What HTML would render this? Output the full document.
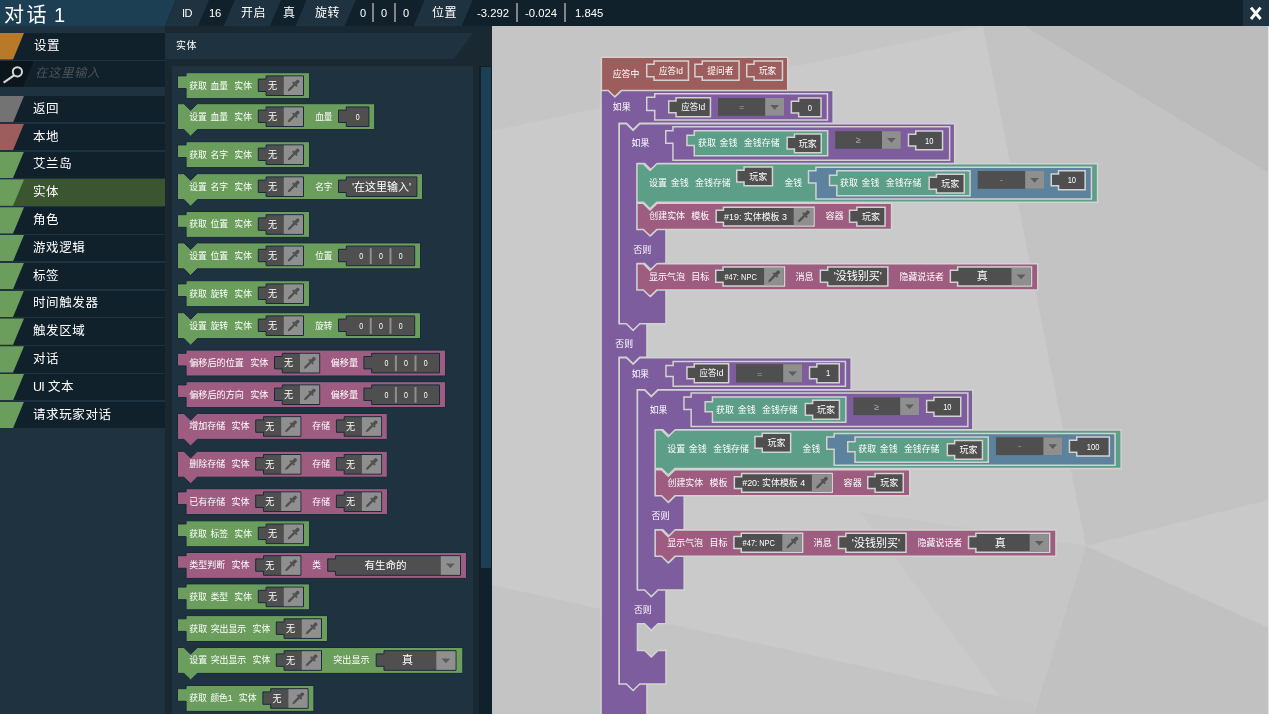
<!DOCTYPE html>
<html lang="zh"><head><meta charset="utf-8"><title>对话 1</title>
<style>
html,body{margin:0;padding:0;background:#1a2832;}
body{width:1269px;height:714px;overflow:hidden;position:relative;font-family:"Liberation Sans","Noto Sans CJK SC",sans-serif;color:#fff;}
#app{position:absolute;left:0;top:0;width:1269px;height:714px;overflow:hidden;background:#1a2832;}
#app svg,#app span,#app em{will-change:transform;}
#topbar{position:absolute;left:0;top:0;width:1269px;height:26px;background:#11212c;overflow:hidden;}
#title{position:absolute;left:0;top:0;width:176px;height:26px;background:#1c3f54;clip-path:polygon(0 0,176px 0,165px 26px,0 26px);}
#title span{position:absolute;left:4px;top:1.4px;font-size:20px;line-height:28px;letter-spacing:2.6px;white-space:nowrap;}
#title em{position:absolute;left:54.2px;top:1.4px;font-size:20px;line-height:28px;font-style:normal;}
.seg{position:absolute;top:0;height:26px;clip-path:polygon(11px 0,100% 0,calc(100% - 11px) 26px,0 26px);}
.seg.l{background:#1e323f;}
.seg.v{background:#11212c;}
.seg b{position:absolute;top:0;font-weight:normal;font-size:12px;line-height:25px;white-space:nowrap;transform-origin:0 50%;}
.sep{position:absolute;top:3px;width:2px;height:19px;background:#858585;}
#close{position:absolute;left:1243px;top:0;width:26px;height:26px;background:#1e323f;}
#side{position:absolute;left:0;top:26px;width:165px;height:688px;background:#1e323f;}
.row{position:absolute;left:0;width:165px;height:26.4px;background:#11212c;}
.row i{position:absolute;left:0;top:0;width:24px;height:100%;clip-path:polygon(0 0,24px 0,13px 100%,0 100%);}
.row span{position:absolute;left:32.8px;top:0.9px;font-size:12.5px;line-height:25px;letter-spacing:0.6px;white-space:nowrap;}
.row u{text-decoration:none;letter-spacing:-0.8px;}
.row.sel{background:#3a5530;}
.row.sel i{width:40px;clip-path:polygon(0 0,24px 0,13px 100%,0 100%);}
#set{position:absolute;left:0;top:33px;width:165px;height:26.6px;background:#11212c;}
#set i{position:absolute;left:0;top:0;width:24px;height:100%;background:#b87a28;clip-path:polygon(0 0,24px 0,13px 100%,0 100%);}
#set span{position:absolute;left:34px;top:1.2px;font-size:12.5px;line-height:25px;letter-spacing:0.6px;}
#search{position:absolute;left:0;top:60.6px;width:165px;height:26px;background:#11212c;}
#search i{position:absolute;left:0;top:0;width:34px;height:100%;background:#0b151c;clip-path:polygon(0 0,34px 0,23px 100%,0 100%);}
#search span{position:absolute;left:35px;top:0.2px;font-size:12.5px;line-height:25px;letter-spacing:0.5px;color:#4a5358;font-style:italic;}
#phead{position:absolute;left:165px;top:33px;width:308px;height:26px;background:#1e323f;clip-path:polygon(0 0,308px 0,289px 26px,0 26px);}
#phead span{position:absolute;left:10.8px;top:0;font-size:10px;line-height:26px;letter-spacing:0.6px;}
#pal{position:absolute;left:172px;top:66px;width:301px;height:648px;background:#1e323f;overflow:hidden;}
#track{position:absolute;left:479px;top:66px;width:13px;height:648px;background:#11212c;}
#thumb{position:absolute;left:481px;top:67px;width:10px;height:501px;background:#1c3f54;}
#canvas{position:absolute;left:492px;top:26px;width:777px;height:688px;background:#cacaca;overflow:hidden;}
#edge{position:absolute;left:1268px;top:26px;width:1px;height:688px;background:#e4e4e4;}
</style></head><body>
<div id="app">
<div id="topbar">
<div class="seg l" style="left:165.4px;width:43.6px"></div>
<div class="seg l" style="left:223.8px;width:57.2px"></div>
<div class="seg l" style="left:295.5px;width:60.2px"></div>
<div class="seg l" style="left:413.6px;width:59.1px"></div>
<span style="position:absolute;left:182.3px;top:0.8px;font-size:11px;line-height:25px;white-space:nowrap;letter-spacing:-0.6px;">ID</span>
<span style="position:absolute;left:208.8px;top:0.8px;font-size:11.3px;line-height:25px;white-space:nowrap;letter-spacing:-0.2px;">16</span>
<span style="position:absolute;left:241px;top:0.8px;font-size:12px;line-height:25px;white-space:nowrap;letter-spacing:0.4px;">开启</span>
<span style="position:absolute;left:283px;top:0.8px;font-size:12px;line-height:25px;white-space:nowrap;">真</span>
<span style="position:absolute;left:314.7px;top:0.8px;font-size:12px;line-height:25px;white-space:nowrap;letter-spacing:0.4px;">旋转</span>
<span style="position:absolute;left:359.6px;top:0.8px;font-size:11px;line-height:25px;white-space:nowrap;">0</span>
<span style="position:absolute;left:381px;top:0.8px;font-size:11px;line-height:25px;white-space:nowrap;">0</span>
<span style="position:absolute;left:403px;top:0.8px;font-size:11px;line-height:25px;white-space:nowrap;">0</span>
<span style="position:absolute;left:432.2px;top:0.8px;font-size:12px;line-height:25px;white-space:nowrap;letter-spacing:0.4px;">位置</span>
<span style="position:absolute;left:476.8px;top:0.8px;font-size:11.3px;line-height:25px;white-space:nowrap;">-3.292</span>
<span style="position:absolute;left:524.6px;top:0.8px;font-size:11.3px;line-height:25px;white-space:nowrap;">-0.024</span>
<span style="position:absolute;left:575px;top:0.8px;font-size:11.3px;line-height:25px;white-space:nowrap;">1.845</span>
<div class="sep" style="left:372.2px"></div>
<div class="sep" style="left:393.8px"></div>
<div class="sep" style="left:516px"></div>
<div class="sep" style="left:564.2px"></div>
</div>
<div id="title"><span>对话</span><em>1</em></div>
<div id="close"><svg width="26" height="26" viewBox="0 0 26 26" style="position:absolute;left:0;top:0"><path d="M8 7.6 L17.6 19 M17.6 7.6 L8 19" stroke="#fff" stroke-width="3" fill="none"/></svg></div>
<div id="side">
</div>
<div id="set"><i></i><span>设置</span></div>
<div id="search"><i></i><svg width="34" height="26" viewBox="0 0 34 26" style="position:absolute;left:0;top:0"><circle cx="17.4" cy="10.8" r="4.6" fill="none" stroke="#d6d6d6" stroke-width="2"/><path d="M14 14.4 L3.6 21.6" stroke="#d6d6d6" stroke-width="2.2" fill="none"/></svg><span>在这里输入</span></div>
<div class="row" style="top:96px"><i style="background:#737373"></i><span>返回</span></div>
<div class="row" style="top:123.8px"><i style="background:#9e5d5d"></i><span>本地</span></div>
<div class="row" style="top:151.6px"><i style="background:#6b9e5d"></i><span>艾兰岛</span></div>
<div class="row sel" style="top:179.4px"><i style="background:#6b9e5d"></i><span>实体</span></div>
<div class="row" style="top:207.2px"><i style="background:#6b9e5d"></i><span>角色</span></div>
<div class="row" style="top:235px"><i style="background:#6b9e5d"></i><span>游戏逻辑</span></div>
<div class="row" style="top:262.8px"><i style="background:#6b9e5d"></i><span>标签</span></div>
<div class="row" style="top:290.6px"><i style="background:#6b9e5d"></i><span>时间触发器</span></div>
<div class="row" style="top:318.4px"><i style="background:#6b9e5d"></i><span>触发区域</span></div>
<div class="row" style="top:346.2px"><i style="background:#6b9e5d"></i><span>对话</span></div>
<div class="row" style="top:374px"><i style="background:#6b9e5d"></i><span><u>UI</u> 文本</span></div>
<div class="row" style="top:401.8px"><i style="background:#6b9e5d"></i><span>请求玩家对话</span></div>
<div id="phead"><span>实体</span></div>
<div id="pal"><svg width="301" height="648" viewBox="172 66 301 648" font-family='"Liberation Sans","Noto Sans CJK SC",sans-serif' style="position:absolute;left:0;top:0;"><path d="M186.1 72.7 L309.5 72.7 L309.5 98.6 L186.1 98.6 L186.1 88.5 L177.5 88.5 L177.5 75.9 L186.1 75.9 Z" fill="#6b9e5d" stroke="#1a2a3b" stroke-width="1"/>
<text x="189.2" y="88.6" font-size="8.8" text-anchor="start" fill="#fff" textLength="17.63" lengthAdjust="spacingAndGlyphs">获取</text>
<text x="210.43" y="88.6" font-size="8.8" text-anchor="start" fill="#fff" textLength="17.63" lengthAdjust="spacingAndGlyphs">血量</text>
<text x="234.37" y="88.6" font-size="8.8" text-anchor="start" fill="#fff" textLength="17.63" lengthAdjust="spacingAndGlyphs">实体</text>
<path d="M266.1 75.9 L303.5 75.9 L303.5 95.5 L266.1 95.5 L266.1 91.5 L258.3 91.5 L258.3 79.1 L266.1 79.1 Z" fill="#4f4f4f" stroke="#1a2a3b" stroke-width="1"/>
<rect x="283.8" y="76.4" width="19.2" height="18.6" fill="#8f8f8f"/>
<g transform="translate(293.7 85.4) rotate(-45)" fill="#505050"><path d="M-8.4 0 L-6.4 -1.15 L1.2 -1.15 L1.2 1.15 L-6.4 1.15 Z"/><rect x="0.8" y="-3.1" width="1.7" height="6.2"/><path d="M2.4 -1.7 L6.8 -1.7 Q8.2 0 6.8 1.7 L2.4 1.7 Z"/></g>
<text x="272.4" y="88.94" font-size="9" text-anchor="middle" fill="#fff">无</text>
<path d="M177.5 103.7 L183.9 103.7 L190.6 110.3 L197.3 103.7 L374.7 103.7 L374.7 129.6 L197.3 129.6 L190.6 136.2 L183.9 129.6 L177.5 129.6 Z" fill="#6b9e5d" stroke="#1a2a3b" stroke-width="1"/>
<text x="189.2" y="119.6" font-size="8.8" text-anchor="start" fill="#fff" textLength="17.63" lengthAdjust="spacingAndGlyphs">设置</text>
<text x="210.43" y="119.6" font-size="8.8" text-anchor="start" fill="#fff" textLength="17.63" lengthAdjust="spacingAndGlyphs">血量</text>
<text x="234.37" y="119.6" font-size="8.8" text-anchor="start" fill="#fff" textLength="17.63" lengthAdjust="spacingAndGlyphs">实体</text>
<path d="M266.1 106.9 L303.5 106.9 L303.5 126.5 L266.1 126.5 L266.1 122.5 L258.3 122.5 L258.3 110.1 L266.1 110.1 Z" fill="#4f4f4f" stroke="#1a2a3b" stroke-width="1"/>
<rect x="283.8" y="107.4" width="19.2" height="18.6" fill="#8f8f8f"/>
<g transform="translate(293.7 116.4) rotate(-45)" fill="#505050"><path d="M-8.4 0 L-6.4 -1.15 L1.2 -1.15 L1.2 1.15 L-6.4 1.15 Z"/><rect x="0.8" y="-3.1" width="1.7" height="6.2"/><path d="M2.4 -1.7 L6.8 -1.7 Q8.2 0 6.8 1.7 L2.4 1.7 Z"/></g>
<text x="272.4" y="119.94" font-size="9" text-anchor="middle" fill="#fff">无</text>
<text x="315.2" y="119.6" font-size="8.8" text-anchor="start" fill="#fff" textLength="17.2" lengthAdjust="spacingAndGlyphs">血量</text>
<path d="M346.3 106.9 L368.9 106.9 L368.9 126.5 L346.3 126.5 L346.3 122.5 L338.5 122.5 L338.5 110.1 L346.3 110.1 Z" fill="#4f4f4f" stroke="#1a2a3b" stroke-width="1"/>
<text x="357.6" y="119.94" font-size="9" text-anchor="middle" fill="#fff" textLength="3.9" lengthAdjust="spacingAndGlyphs">0</text>
<path d="M186.1 141.7 L309.5 141.7 L309.5 167.6 L186.1 167.6 L186.1 157.5 L177.5 157.5 L177.5 144.9 L186.1 144.9 Z" fill="#6b9e5d" stroke="#1a2a3b" stroke-width="1"/>
<text x="189.2" y="157.6" font-size="8.8" text-anchor="start" fill="#fff" textLength="17.63" lengthAdjust="spacingAndGlyphs">获取</text>
<text x="210.43" y="157.6" font-size="8.8" text-anchor="start" fill="#fff" textLength="17.63" lengthAdjust="spacingAndGlyphs">名字</text>
<text x="234.37" y="157.6" font-size="8.8" text-anchor="start" fill="#fff" textLength="17.63" lengthAdjust="spacingAndGlyphs">实体</text>
<path d="M266.1 144.9 L303.5 144.9 L303.5 164.5 L266.1 164.5 L266.1 160.5 L258.3 160.5 L258.3 148.1 L266.1 148.1 Z" fill="#4f4f4f" stroke="#1a2a3b" stroke-width="1"/>
<rect x="283.8" y="145.4" width="19.2" height="18.6" fill="#8f8f8f"/>
<g transform="translate(293.7 154.4) rotate(-45)" fill="#505050"><path d="M-8.4 0 L-6.4 -1.15 L1.2 -1.15 L1.2 1.15 L-6.4 1.15 Z"/><rect x="0.8" y="-3.1" width="1.7" height="6.2"/><path d="M2.4 -1.7 L6.8 -1.7 Q8.2 0 6.8 1.7 L2.4 1.7 Z"/></g>
<text x="272.4" y="157.94" font-size="9" text-anchor="middle" fill="#fff">无</text>
<path d="M177.5 173.7 L183.9 173.7 L190.6 180.3 L197.3 173.7 L422.5 173.7 L422.5 199.6 L197.3 199.6 L190.6 206.2 L183.9 199.6 L177.5 199.6 Z" fill="#6b9e5d" stroke="#1a2a3b" stroke-width="1"/>
<text x="189.2" y="189.6" font-size="8.8" text-anchor="start" fill="#fff" textLength="17.63" lengthAdjust="spacingAndGlyphs">设置</text>
<text x="210.43" y="189.6" font-size="8.8" text-anchor="start" fill="#fff" textLength="17.63" lengthAdjust="spacingAndGlyphs">名字</text>
<text x="234.37" y="189.6" font-size="8.8" text-anchor="start" fill="#fff" textLength="17.63" lengthAdjust="spacingAndGlyphs">实体</text>
<path d="M266.1 176.9 L303.5 176.9 L303.5 196.5 L266.1 196.5 L266.1 192.5 L258.3 192.5 L258.3 180.1 L266.1 180.1 Z" fill="#4f4f4f" stroke="#1a2a3b" stroke-width="1"/>
<rect x="283.8" y="177.4" width="19.2" height="18.6" fill="#8f8f8f"/>
<g transform="translate(293.7 186.4) rotate(-45)" fill="#505050"><path d="M-8.4 0 L-6.4 -1.15 L1.2 -1.15 L1.2 1.15 L-6.4 1.15 Z"/><rect x="0.8" y="-3.1" width="1.7" height="6.2"/><path d="M2.4 -1.7 L6.8 -1.7 Q8.2 0 6.8 1.7 L2.4 1.7 Z"/></g>
<text x="272.4" y="189.94" font-size="9" text-anchor="middle" fill="#fff">无</text>
<text x="315.2" y="189.6" font-size="8.8" text-anchor="start" fill="#fff" textLength="17.2" lengthAdjust="spacingAndGlyphs">名字</text>
<path d="M346.3 176.9 L416.9 176.9 L416.9 196.5 L346.3 196.5 L346.3 192.5 L338.5 192.5 L338.5 180.1 L346.3 180.1 Z" fill="#4f4f4f" stroke="#1a2a3b" stroke-width="1"/>
<text x="381.6" y="190.66" font-size="11" text-anchor="middle" fill="#fff">'在这里输入'</text>
<path d="M186.1 211.5 L309.5 211.5 L309.5 237.4 L186.1 237.4 L186.1 227.3 L177.5 227.3 L177.5 214.7 L186.1 214.7 Z" fill="#6b9e5d" stroke="#1a2a3b" stroke-width="1"/>
<text x="189.2" y="227.4" font-size="8.8" text-anchor="start" fill="#fff" textLength="17.63" lengthAdjust="spacingAndGlyphs">获取</text>
<text x="210.43" y="227.4" font-size="8.8" text-anchor="start" fill="#fff" textLength="17.63" lengthAdjust="spacingAndGlyphs">位置</text>
<text x="234.37" y="227.4" font-size="8.8" text-anchor="start" fill="#fff" textLength="17.63" lengthAdjust="spacingAndGlyphs">实体</text>
<path d="M266.1 214.7 L303.5 214.7 L303.5 234.3 L266.1 234.3 L266.1 230.3 L258.3 230.3 L258.3 217.9 L266.1 217.9 Z" fill="#4f4f4f" stroke="#1a2a3b" stroke-width="1"/>
<rect x="283.8" y="215.2" width="19.2" height="18.6" fill="#8f8f8f"/>
<g transform="translate(293.7 224.2) rotate(-45)" fill="#505050"><path d="M-8.4 0 L-6.4 -1.15 L1.2 -1.15 L1.2 1.15 L-6.4 1.15 Z"/><rect x="0.8" y="-3.1" width="1.7" height="6.2"/><path d="M2.4 -1.7 L6.8 -1.7 Q8.2 0 6.8 1.7 L2.4 1.7 Z"/></g>
<text x="272.4" y="227.74" font-size="9" text-anchor="middle" fill="#fff">无</text>
<path d="M177.5 242.9 L183.9 242.9 L190.6 249.5 L197.3 242.9 L420.5 242.9 L420.5 268.8 L197.3 268.8 L190.6 275.4 L183.9 268.8 L177.5 268.8 Z" fill="#6b9e5d" stroke="#1a2a3b" stroke-width="1"/>
<text x="189.2" y="258.8" font-size="8.8" text-anchor="start" fill="#fff" textLength="17.63" lengthAdjust="spacingAndGlyphs">设置</text>
<text x="210.43" y="258.8" font-size="8.8" text-anchor="start" fill="#fff" textLength="17.63" lengthAdjust="spacingAndGlyphs">位置</text>
<text x="234.37" y="258.8" font-size="8.8" text-anchor="start" fill="#fff" textLength="17.63" lengthAdjust="spacingAndGlyphs">实体</text>
<path d="M266.1 246.1 L303.5 246.1 L303.5 265.7 L266.1 265.7 L266.1 261.7 L258.3 261.7 L258.3 249.3 L266.1 249.3 Z" fill="#4f4f4f" stroke="#1a2a3b" stroke-width="1"/>
<rect x="283.8" y="246.6" width="19.2" height="18.6" fill="#8f8f8f"/>
<g transform="translate(293.7 255.6) rotate(-45)" fill="#505050"><path d="M-8.4 0 L-6.4 -1.15 L1.2 -1.15 L1.2 1.15 L-6.4 1.15 Z"/><rect x="0.8" y="-3.1" width="1.7" height="6.2"/><path d="M2.4 -1.7 L6.8 -1.7 Q8.2 0 6.8 1.7 L2.4 1.7 Z"/></g>
<text x="272.4" y="259.14" font-size="9" text-anchor="middle" fill="#fff">无</text>
<text x="315.2" y="258.8" font-size="8.8" text-anchor="start" fill="#fff" textLength="17.2" lengthAdjust="spacingAndGlyphs">位置</text>
<path d="M346.3 246.1 L414.7 246.1 L414.7 265.7 L346.3 265.7 L346.3 261.7 L338.5 261.7 L338.5 249.3 L346.3 249.3 Z" fill="#4f4f4f" stroke="#1a2a3b" stroke-width="1"/>
<text x="361.29" y="259" font-size="9" text-anchor="middle" fill="#fff" textLength="3.9" lengthAdjust="spacingAndGlyphs">0</text>
<text x="380.97" y="259" font-size="9" text-anchor="middle" fill="#fff" textLength="3.9" lengthAdjust="spacingAndGlyphs">0</text>
<text x="400.72" y="259" font-size="9" text-anchor="middle" fill="#fff" textLength="3.9" lengthAdjust="spacingAndGlyphs">0</text>
<rect x="369.73" y="248.2" width="2" height="15.8" fill="#8e8e8e"/>
<rect x="389.48" y="248.2" width="2" height="15.8" fill="#8e8e8e"/>
<path d="M186.1 280.7 L309.5 280.7 L309.5 306.6 L186.1 306.6 L186.1 296.5 L177.5 296.5 L177.5 283.9 L186.1 283.9 Z" fill="#6b9e5d" stroke="#1a2a3b" stroke-width="1"/>
<text x="189.2" y="296.6" font-size="8.8" text-anchor="start" fill="#fff" textLength="17.63" lengthAdjust="spacingAndGlyphs">获取</text>
<text x="210.43" y="296.6" font-size="8.8" text-anchor="start" fill="#fff" textLength="17.63" lengthAdjust="spacingAndGlyphs">旋转</text>
<text x="234.37" y="296.6" font-size="8.8" text-anchor="start" fill="#fff" textLength="17.63" lengthAdjust="spacingAndGlyphs">实体</text>
<path d="M266.1 283.9 L303.5 283.9 L303.5 303.5 L266.1 303.5 L266.1 299.5 L258.3 299.5 L258.3 287.1 L266.1 287.1 Z" fill="#4f4f4f" stroke="#1a2a3b" stroke-width="1"/>
<rect x="283.8" y="284.4" width="19.2" height="18.6" fill="#8f8f8f"/>
<g transform="translate(293.7 293.4) rotate(-45)" fill="#505050"><path d="M-8.4 0 L-6.4 -1.15 L1.2 -1.15 L1.2 1.15 L-6.4 1.15 Z"/><rect x="0.8" y="-3.1" width="1.7" height="6.2"/><path d="M2.4 -1.7 L6.8 -1.7 Q8.2 0 6.8 1.7 L2.4 1.7 Z"/></g>
<text x="272.4" y="296.94" font-size="9" text-anchor="middle" fill="#fff">无</text>
<path d="M177.5 312.7 L183.9 312.7 L190.6 319.3 L197.3 312.7 L420.5 312.7 L420.5 338.6 L197.3 338.6 L190.6 345.2 L183.9 338.6 L177.5 338.6 Z" fill="#6b9e5d" stroke="#1a2a3b" stroke-width="1"/>
<text x="189.2" y="328.6" font-size="8.8" text-anchor="start" fill="#fff" textLength="17.63" lengthAdjust="spacingAndGlyphs">设置</text>
<text x="210.43" y="328.6" font-size="8.8" text-anchor="start" fill="#fff" textLength="17.63" lengthAdjust="spacingAndGlyphs">旋转</text>
<text x="234.37" y="328.6" font-size="8.8" text-anchor="start" fill="#fff" textLength="17.63" lengthAdjust="spacingAndGlyphs">实体</text>
<path d="M266.1 315.9 L303.5 315.9 L303.5 335.5 L266.1 335.5 L266.1 331.5 L258.3 331.5 L258.3 319.1 L266.1 319.1 Z" fill="#4f4f4f" stroke="#1a2a3b" stroke-width="1"/>
<rect x="283.8" y="316.4" width="19.2" height="18.6" fill="#8f8f8f"/>
<g transform="translate(293.7 325.4) rotate(-45)" fill="#505050"><path d="M-8.4 0 L-6.4 -1.15 L1.2 -1.15 L1.2 1.15 L-6.4 1.15 Z"/><rect x="0.8" y="-3.1" width="1.7" height="6.2"/><path d="M2.4 -1.7 L6.8 -1.7 Q8.2 0 6.8 1.7 L2.4 1.7 Z"/></g>
<text x="272.4" y="328.94" font-size="9" text-anchor="middle" fill="#fff">无</text>
<text x="315.2" y="328.6" font-size="8.8" text-anchor="start" fill="#fff" textLength="17.2" lengthAdjust="spacingAndGlyphs">旋转</text>
<path d="M346.3 315.9 L414.7 315.9 L414.7 335.5 L346.3 335.5 L346.3 331.5 L338.5 331.5 L338.5 319.1 L346.3 319.1 Z" fill="#4f4f4f" stroke="#1a2a3b" stroke-width="1"/>
<text x="361.29" y="328.8" font-size="9" text-anchor="middle" fill="#fff" textLength="3.9" lengthAdjust="spacingAndGlyphs">0</text>
<text x="380.97" y="328.8" font-size="9" text-anchor="middle" fill="#fff" textLength="3.9" lengthAdjust="spacingAndGlyphs">0</text>
<text x="400.72" y="328.8" font-size="9" text-anchor="middle" fill="#fff" textLength="3.9" lengthAdjust="spacingAndGlyphs">0</text>
<rect x="369.73" y="318" width="2" height="15.8" fill="#8e8e8e"/>
<rect x="389.48" y="318" width="2" height="15.8" fill="#8e8e8e"/>
<path d="M186.1 350.1 L445.5 350.1 L445.5 376 L186.1 376 L186.1 365.9 L177.5 365.9 L177.5 353.3 L186.1 353.3 Z" fill="#9e5d80" stroke="#1a2a3b" stroke-width="1"/>
<text x="189.2" y="366" font-size="8.8" text-anchor="start" fill="#fff" textLength="54.68" lengthAdjust="spacingAndGlyphs">偏移后的位置</text>
<text x="250.17" y="366" font-size="8.8" text-anchor="start" fill="#fff" textLength="18.43" lengthAdjust="spacingAndGlyphs">实体</text>
<path d="M282.3 353.3 L319.7 353.3 L319.7 372.9 L282.3 372.9 L282.3 368.9 L274.5 368.9 L274.5 356.5 L282.3 356.5 Z" fill="#4f4f4f" stroke="#1a2a3b" stroke-width="1"/>
<rect x="300" y="353.8" width="19.2" height="18.6" fill="#8f8f8f"/>
<g transform="translate(309.9 362.8) rotate(-45)" fill="#505050"><path d="M-8.4 0 L-6.4 -1.15 L1.2 -1.15 L1.2 1.15 L-6.4 1.15 Z"/><rect x="0.8" y="-3.1" width="1.7" height="6.2"/><path d="M2.4 -1.7 L6.8 -1.7 Q8.2 0 6.8 1.7 L2.4 1.7 Z"/></g>
<text x="288.6" y="366.34" font-size="9" text-anchor="middle" fill="#fff">无</text>
<text x="330.5" y="366" font-size="8.8" text-anchor="start" fill="#fff" textLength="27.8" lengthAdjust="spacingAndGlyphs">偏移量</text>
<path d="M371.7 353.3 L439.5 353.3 L439.5 372.9 L371.7 372.9 L371.7 368.9 L363.9 368.9 L363.9 356.5 L371.7 356.5 Z" fill="#4f4f4f" stroke="#1a2a3b" stroke-width="1"/>
<text x="386.56" y="366.2" font-size="9" text-anchor="middle" fill="#fff" textLength="3.9" lengthAdjust="spacingAndGlyphs">0</text>
<text x="406.07" y="366.2" font-size="9" text-anchor="middle" fill="#fff" textLength="3.9" lengthAdjust="spacingAndGlyphs">0</text>
<text x="425.64" y="366.2" font-size="9" text-anchor="middle" fill="#fff" textLength="3.9" lengthAdjust="spacingAndGlyphs">0</text>
<rect x="394.91" y="355.4" width="2" height="15.8" fill="#8e8e8e"/>
<rect x="414.49" y="355.4" width="2" height="15.8" fill="#8e8e8e"/>
<path d="M186.1 381.7 L445.5 381.7 L445.5 407.6 L186.1 407.6 L186.1 397.5 L177.5 397.5 L177.5 384.9 L186.1 384.9 Z" fill="#9e5d80" stroke="#1a2a3b" stroke-width="1"/>
<text x="189.2" y="397.6" font-size="8.8" text-anchor="start" fill="#fff" textLength="54.68" lengthAdjust="spacingAndGlyphs">偏移后的方向</text>
<text x="250.17" y="397.6" font-size="8.8" text-anchor="start" fill="#fff" textLength="18.43" lengthAdjust="spacingAndGlyphs">实体</text>
<path d="M282.3 384.9 L319.7 384.9 L319.7 404.5 L282.3 404.5 L282.3 400.5 L274.5 400.5 L274.5 388.1 L282.3 388.1 Z" fill="#4f4f4f" stroke="#1a2a3b" stroke-width="1"/>
<rect x="300" y="385.4" width="19.2" height="18.6" fill="#8f8f8f"/>
<g transform="translate(309.9 394.4) rotate(-45)" fill="#505050"><path d="M-8.4 0 L-6.4 -1.15 L1.2 -1.15 L1.2 1.15 L-6.4 1.15 Z"/><rect x="0.8" y="-3.1" width="1.7" height="6.2"/><path d="M2.4 -1.7 L6.8 -1.7 Q8.2 0 6.8 1.7 L2.4 1.7 Z"/></g>
<text x="288.6" y="397.94" font-size="9" text-anchor="middle" fill="#fff">无</text>
<text x="330.5" y="397.6" font-size="8.8" text-anchor="start" fill="#fff" textLength="27.8" lengthAdjust="spacingAndGlyphs">偏移量</text>
<path d="M371.7 384.9 L439.5 384.9 L439.5 404.5 L371.7 404.5 L371.7 400.5 L363.9 400.5 L363.9 388.1 L371.7 388.1 Z" fill="#4f4f4f" stroke="#1a2a3b" stroke-width="1"/>
<text x="386.56" y="397.8" font-size="9" text-anchor="middle" fill="#fff" textLength="3.9" lengthAdjust="spacingAndGlyphs">0</text>
<text x="406.07" y="397.8" font-size="9" text-anchor="middle" fill="#fff" textLength="3.9" lengthAdjust="spacingAndGlyphs">0</text>
<text x="425.64" y="397.8" font-size="9" text-anchor="middle" fill="#fff" textLength="3.9" lengthAdjust="spacingAndGlyphs">0</text>
<rect x="394.91" y="387" width="2" height="15.8" fill="#8e8e8e"/>
<rect x="414.49" y="387" width="2" height="15.8" fill="#8e8e8e"/>
<path d="M177.5 413.5 L183.9 413.5 L190.6 420.1 L197.3 413.5 L387.3 413.5 L387.3 439.4 L197.3 439.4 L190.6 446 L183.9 439.4 L177.5 439.4 Z" fill="#9e5d80" stroke="#1a2a3b" stroke-width="1"/>
<text x="189.2" y="429.4" font-size="8.8" text-anchor="start" fill="#fff" textLength="35.97" lengthAdjust="spacingAndGlyphs">增加存储</text>
<text x="231.47" y="429.4" font-size="8.8" text-anchor="start" fill="#fff" textLength="18.13" lengthAdjust="spacingAndGlyphs">实体</text>
<path d="M263.5 416.7 L300.9 416.7 L300.9 436.3 L263.5 436.3 L263.5 432.3 L255.7 432.3 L255.7 419.9 L263.5 419.9 Z" fill="#4f4f4f" stroke="#1a2a3b" stroke-width="1"/>
<rect x="281.2" y="417.2" width="19.2" height="18.6" fill="#8f8f8f"/>
<g transform="translate(291.1 426.2) rotate(-45)" fill="#505050"><path d="M-8.4 0 L-6.4 -1.15 L1.2 -1.15 L1.2 1.15 L-6.4 1.15 Z"/><rect x="0.8" y="-3.1" width="1.7" height="6.2"/><path d="M2.4 -1.7 L6.8 -1.7 Q8.2 0 6.8 1.7 L2.4 1.7 Z"/></g>
<text x="269.8" y="429.74" font-size="9" text-anchor="middle" fill="#fff">无</text>
<text x="312.3" y="429.4" font-size="8.8" text-anchor="start" fill="#fff" textLength="17.7" lengthAdjust="spacingAndGlyphs">存储</text>
<path d="M344.2 416.7 L381.6 416.7 L381.6 436.3 L344.2 436.3 L344.2 432.3 L336.4 432.3 L336.4 419.9 L344.2 419.9 Z" fill="#4f4f4f" stroke="#1a2a3b" stroke-width="1"/>
<rect x="361.9" y="417.2" width="19.2" height="18.6" fill="#8f8f8f"/>
<g transform="translate(371.8 426.2) rotate(-45)" fill="#505050"><path d="M-8.4 0 L-6.4 -1.15 L1.2 -1.15 L1.2 1.15 L-6.4 1.15 Z"/><rect x="0.8" y="-3.1" width="1.7" height="6.2"/><path d="M2.4 -1.7 L6.8 -1.7 Q8.2 0 6.8 1.7 L2.4 1.7 Z"/></g>
<text x="350.5" y="429.74" font-size="9" text-anchor="middle" fill="#fff">无</text>
<path d="M177.5 451.3 L183.9 451.3 L190.6 457.9 L197.3 451.3 L387.3 451.3 L387.3 477.2 L197.3 477.2 L190.6 483.8 L183.9 477.2 L177.5 477.2 Z" fill="#9e5d80" stroke="#1a2a3b" stroke-width="1"/>
<text x="189.2" y="467.2" font-size="8.8" text-anchor="start" fill="#fff" textLength="35.97" lengthAdjust="spacingAndGlyphs">删除存储</text>
<text x="231.47" y="467.2" font-size="8.8" text-anchor="start" fill="#fff" textLength="18.13" lengthAdjust="spacingAndGlyphs">实体</text>
<path d="M263.5 454.5 L300.9 454.5 L300.9 474.1 L263.5 474.1 L263.5 470.1 L255.7 470.1 L255.7 457.7 L263.5 457.7 Z" fill="#4f4f4f" stroke="#1a2a3b" stroke-width="1"/>
<rect x="281.2" y="455" width="19.2" height="18.6" fill="#8f8f8f"/>
<g transform="translate(291.1 464) rotate(-45)" fill="#505050"><path d="M-8.4 0 L-6.4 -1.15 L1.2 -1.15 L1.2 1.15 L-6.4 1.15 Z"/><rect x="0.8" y="-3.1" width="1.7" height="6.2"/><path d="M2.4 -1.7 L6.8 -1.7 Q8.2 0 6.8 1.7 L2.4 1.7 Z"/></g>
<text x="269.8" y="467.54" font-size="9" text-anchor="middle" fill="#fff">无</text>
<text x="312.3" y="467.2" font-size="8.8" text-anchor="start" fill="#fff" textLength="17.7" lengthAdjust="spacingAndGlyphs">存储</text>
<path d="M344.2 454.5 L381.6 454.5 L381.6 474.1 L344.2 474.1 L344.2 470.1 L336.4 470.1 L336.4 457.7 L344.2 457.7 Z" fill="#4f4f4f" stroke="#1a2a3b" stroke-width="1"/>
<rect x="361.9" y="455" width="19.2" height="18.6" fill="#8f8f8f"/>
<g transform="translate(371.8 464) rotate(-45)" fill="#505050"><path d="M-8.4 0 L-6.4 -1.15 L1.2 -1.15 L1.2 1.15 L-6.4 1.15 Z"/><rect x="0.8" y="-3.1" width="1.7" height="6.2"/><path d="M2.4 -1.7 L6.8 -1.7 Q8.2 0 6.8 1.7 L2.4 1.7 Z"/></g>
<text x="350.5" y="467.54" font-size="9" text-anchor="middle" fill="#fff">无</text>
<path d="M186.1 488.7 L387.5 488.7 L387.5 514.6 L186.1 514.6 L186.1 504.5 L177.5 504.5 L177.5 491.9 L186.1 491.9 Z" fill="#9e5d80" stroke="#1a2a3b" stroke-width="1"/>
<text x="189.2" y="504.6" font-size="8.8" text-anchor="start" fill="#fff" textLength="35.97" lengthAdjust="spacingAndGlyphs">已有存储</text>
<text x="231.47" y="504.6" font-size="8.8" text-anchor="start" fill="#fff" textLength="18.13" lengthAdjust="spacingAndGlyphs">实体</text>
<path d="M263.5 491.9 L300.9 491.9 L300.9 511.5 L263.5 511.5 L263.5 507.5 L255.7 507.5 L255.7 495.1 L263.5 495.1 Z" fill="#4f4f4f" stroke="#1a2a3b" stroke-width="1"/>
<rect x="281.2" y="492.4" width="19.2" height="18.6" fill="#8f8f8f"/>
<g transform="translate(291.1 501.4) rotate(-45)" fill="#505050"><path d="M-8.4 0 L-6.4 -1.15 L1.2 -1.15 L1.2 1.15 L-6.4 1.15 Z"/><rect x="0.8" y="-3.1" width="1.7" height="6.2"/><path d="M2.4 -1.7 L6.8 -1.7 Q8.2 0 6.8 1.7 L2.4 1.7 Z"/></g>
<text x="269.8" y="504.94" font-size="9" text-anchor="middle" fill="#fff">无</text>
<text x="312.3" y="504.6" font-size="8.8" text-anchor="start" fill="#fff" textLength="17.7" lengthAdjust="spacingAndGlyphs">存储</text>
<path d="M344.2 491.9 L381.6 491.9 L381.6 511.5 L344.2 511.5 L344.2 507.5 L336.4 507.5 L336.4 495.1 L344.2 495.1 Z" fill="#4f4f4f" stroke="#1a2a3b" stroke-width="1"/>
<rect x="361.9" y="492.4" width="19.2" height="18.6" fill="#8f8f8f"/>
<g transform="translate(371.8 501.4) rotate(-45)" fill="#505050"><path d="M-8.4 0 L-6.4 -1.15 L1.2 -1.15 L1.2 1.15 L-6.4 1.15 Z"/><rect x="0.8" y="-3.1" width="1.7" height="6.2"/><path d="M2.4 -1.7 L6.8 -1.7 Q8.2 0 6.8 1.7 L2.4 1.7 Z"/></g>
<text x="350.5" y="504.94" font-size="9" text-anchor="middle" fill="#fff">无</text>
<path d="M186.1 520.8 L309.5 520.8 L309.5 546.7 L186.1 546.7 L186.1 536.6 L177.5 536.6 L177.5 524 L186.1 524 Z" fill="#6b9e5d" stroke="#1a2a3b" stroke-width="1"/>
<text x="189.2" y="536.7" font-size="8.8" text-anchor="start" fill="#fff" textLength="17.63" lengthAdjust="spacingAndGlyphs">获取</text>
<text x="210.43" y="536.7" font-size="8.8" text-anchor="start" fill="#fff" textLength="17.63" lengthAdjust="spacingAndGlyphs">标签</text>
<text x="234.37" y="536.7" font-size="8.8" text-anchor="start" fill="#fff" textLength="17.63" lengthAdjust="spacingAndGlyphs">实体</text>
<path d="M266.1 524 L303.5 524 L303.5 543.6 L266.1 543.6 L266.1 539.6 L258.3 539.6 L258.3 527.2 L266.1 527.2 Z" fill="#4f4f4f" stroke="#1a2a3b" stroke-width="1"/>
<rect x="283.8" y="524.5" width="19.2" height="18.6" fill="#8f8f8f"/>
<g transform="translate(293.7 533.5) rotate(-45)" fill="#505050"><path d="M-8.4 0 L-6.4 -1.15 L1.2 -1.15 L1.2 1.15 L-6.4 1.15 Z"/><rect x="0.8" y="-3.1" width="1.7" height="6.2"/><path d="M2.4 -1.7 L6.8 -1.7 Q8.2 0 6.8 1.7 L2.4 1.7 Z"/></g>
<text x="272.4" y="537.04" font-size="9" text-anchor="middle" fill="#fff">无</text>
<path d="M186.1 552.5 L466.5 552.5 L466.5 578.4 L186.1 578.4 L186.1 568.3 L177.5 568.3 L177.5 555.7 L186.1 555.7 Z" fill="#9e5d80" stroke="#1a2a3b" stroke-width="1"/>
<text x="189.2" y="568.4" font-size="8.8" text-anchor="start" fill="#fff" textLength="35.97" lengthAdjust="spacingAndGlyphs">类型判断</text>
<text x="231.47" y="568.4" font-size="8.8" text-anchor="start" fill="#fff" textLength="18.13" lengthAdjust="spacingAndGlyphs">实体</text>
<path d="M263.5 555.7 L300.9 555.7 L300.9 575.3 L263.5 575.3 L263.5 571.3 L255.7 571.3 L255.7 558.9 L263.5 558.9 Z" fill="#4f4f4f" stroke="#1a2a3b" stroke-width="1"/>
<rect x="281.2" y="556.2" width="19.2" height="18.6" fill="#8f8f8f"/>
<g transform="translate(291.1 565.2) rotate(-45)" fill="#505050"><path d="M-8.4 0 L-6.4 -1.15 L1.2 -1.15 L1.2 1.15 L-6.4 1.15 Z"/><rect x="0.8" y="-3.1" width="1.7" height="6.2"/><path d="M2.4 -1.7 L6.8 -1.7 Q8.2 0 6.8 1.7 L2.4 1.7 Z"/></g>
<text x="269.8" y="568.74" font-size="9" text-anchor="middle" fill="#fff">无</text>
<text x="312.3" y="568.4" font-size="8.8" text-anchor="start" fill="#fff" textLength="8.7" lengthAdjust="spacingAndGlyphs">类</text>
<path d="M335.5 555.7 L460.5 555.7 L460.5 575.3 L335.5 575.3 L335.5 571.3 L327.7 571.3 L327.7 558.9 L335.5 558.9 Z" fill="#4f4f4f" stroke="#1a2a3b" stroke-width="1"/>
<rect x="440.8" y="556.2" width="19.2" height="18.6" fill="#8f8f8f"/>
<path d="M446 563.6 h8.8 l-4.4 4.7 Z" fill="#5c5c5c"/>
<text x="385.6" y="569.28" font-size="10.5" text-anchor="middle" fill="#fff">有生命的</text>
<path d="M186.1 583.9 L309.5 583.9 L309.5 609.8 L186.1 609.8 L186.1 599.7 L177.5 599.7 L177.5 587.1 L186.1 587.1 Z" fill="#6b9e5d" stroke="#1a2a3b" stroke-width="1"/>
<text x="189.2" y="599.8" font-size="8.8" text-anchor="start" fill="#fff" textLength="17.63" lengthAdjust="spacingAndGlyphs">获取</text>
<text x="210.43" y="599.8" font-size="8.8" text-anchor="start" fill="#fff" textLength="17.63" lengthAdjust="spacingAndGlyphs">类型</text>
<text x="234.37" y="599.8" font-size="8.8" text-anchor="start" fill="#fff" textLength="17.63" lengthAdjust="spacingAndGlyphs">实体</text>
<path d="M266.1 587.1 L303.5 587.1 L303.5 606.7 L266.1 606.7 L266.1 602.7 L258.3 602.7 L258.3 590.3 L266.1 590.3 Z" fill="#4f4f4f" stroke="#1a2a3b" stroke-width="1"/>
<rect x="283.8" y="587.6" width="19.2" height="18.6" fill="#8f8f8f"/>
<g transform="translate(293.7 596.6) rotate(-45)" fill="#505050"><path d="M-8.4 0 L-6.4 -1.15 L1.2 -1.15 L1.2 1.15 L-6.4 1.15 Z"/><rect x="0.8" y="-3.1" width="1.7" height="6.2"/><path d="M2.4 -1.7 L6.8 -1.7 Q8.2 0 6.8 1.7 L2.4 1.7 Z"/></g>
<text x="272.4" y="600.14" font-size="9" text-anchor="middle" fill="#fff">无</text>
<path d="M186.1 615.6 L327.5 615.6 L327.5 641.5 L186.1 641.5 L186.1 631.4 L177.5 631.4 L177.5 618.8 L186.1 618.8 Z" fill="#6b9e5d" stroke="#1a2a3b" stroke-width="1"/>
<text x="189.2" y="631.5" font-size="8.8" text-anchor="start" fill="#fff" textLength="17.9" lengthAdjust="spacingAndGlyphs">获取</text>
<text x="210.7" y="631.5" font-size="8.8" text-anchor="start" fill="#fff" textLength="35.5" lengthAdjust="spacingAndGlyphs">突出显示</text>
<text x="252.5" y="631.5" font-size="8.8" text-anchor="start" fill="#fff" textLength="17.9" lengthAdjust="spacingAndGlyphs">实体</text>
<path d="M284.1 618.8 L321.5 618.8 L321.5 638.4 L284.1 638.4 L284.1 634.4 L276.3 634.4 L276.3 622 L284.1 622 Z" fill="#4f4f4f" stroke="#1a2a3b" stroke-width="1"/>
<rect x="301.8" y="619.3" width="19.2" height="18.6" fill="#8f8f8f"/>
<g transform="translate(311.7 628.3) rotate(-45)" fill="#505050"><path d="M-8.4 0 L-6.4 -1.15 L1.2 -1.15 L1.2 1.15 L-6.4 1.15 Z"/><rect x="0.8" y="-3.1" width="1.7" height="6.2"/><path d="M2.4 -1.7 L6.8 -1.7 Q8.2 0 6.8 1.7 L2.4 1.7 Z"/></g>
<text x="290.4" y="631.84" font-size="9" text-anchor="middle" fill="#fff">无</text>
<path d="M177.5 647.5 L183.9 647.5 L190.6 654.1 L197.3 647.5 L462.8 647.5 L462.8 673.4 L197.3 673.4 L190.6 680 L183.9 673.4 L177.5 673.4 Z" fill="#6b9e5d" stroke="#1a2a3b" stroke-width="1"/>
<text x="189.2" y="663.4" font-size="8.8" text-anchor="start" fill="#fff" textLength="17.9" lengthAdjust="spacingAndGlyphs">设置</text>
<text x="210.7" y="663.4" font-size="8.8" text-anchor="start" fill="#fff" textLength="35.5" lengthAdjust="spacingAndGlyphs">突出显示</text>
<text x="252.5" y="663.4" font-size="8.8" text-anchor="start" fill="#fff" textLength="17.9" lengthAdjust="spacingAndGlyphs">实体</text>
<path d="M284.1 650.7 L321.5 650.7 L321.5 670.3 L284.1 670.3 L284.1 666.3 L276.3 666.3 L276.3 653.9 L284.1 653.9 Z" fill="#4f4f4f" stroke="#1a2a3b" stroke-width="1"/>
<rect x="301.8" y="651.2" width="19.2" height="18.6" fill="#8f8f8f"/>
<g transform="translate(311.7 660.2) rotate(-45)" fill="#505050"><path d="M-8.4 0 L-6.4 -1.15 L1.2 -1.15 L1.2 1.15 L-6.4 1.15 Z"/><rect x="0.8" y="-3.1" width="1.7" height="6.2"/><path d="M2.4 -1.7 L6.8 -1.7 Q8.2 0 6.8 1.7 L2.4 1.7 Z"/></g>
<text x="290.4" y="663.74" font-size="9" text-anchor="middle" fill="#fff">无</text>
<text x="333.3" y="663.4" font-size="8.8" text-anchor="start" fill="#fff" textLength="36.2" lengthAdjust="spacingAndGlyphs">突出显示</text>
<path d="M384 650.7 L456 650.7 L456 670.3 L384 670.3 L384 666.3 L376.2 666.3 L376.2 653.9 L384 653.9 Z" fill="#4f4f4f" stroke="#1a2a3b" stroke-width="1"/>
<rect x="436.3" y="651.2" width="19.2" height="18.6" fill="#8f8f8f"/>
<path d="M441.5 658.6 h8.8 l-4.4 4.7 Z" fill="#5c5c5c"/>
<text x="407.6" y="664.46" font-size="11" text-anchor="middle" fill="#fff">真</text>
<path d="M186.1 685.5 L313.9 685.5 L313.9 711.4 L186.1 711.4 L186.1 701.3 L177.5 701.3 L177.5 688.7 L186.1 688.7 Z" fill="#6b9e5d" stroke="#1a2a3b" stroke-width="1"/>
<text x="189.2" y="701.4" font-size="8.8" text-anchor="start" fill="#fff" textLength="17.68" lengthAdjust="spacingAndGlyphs">获取</text>
<text x="210.48" y="701.4" font-size="8.8" text-anchor="start" fill="#fff" textLength="22.03" lengthAdjust="spacingAndGlyphs">颜色1</text>
<text x="238.82" y="701.4" font-size="8.8" text-anchor="start" fill="#fff" textLength="17.68" lengthAdjust="spacingAndGlyphs">实体</text>
<path d="M270.7 688.7 L308.1 688.7 L308.1 708.3 L270.7 708.3 L270.7 704.3 L262.9 704.3 L262.9 691.9 L270.7 691.9 Z" fill="#4f4f4f" stroke="#1a2a3b" stroke-width="1"/>
<rect x="288.4" y="689.2" width="19.2" height="18.6" fill="#8f8f8f"/>
<g transform="translate(298.3 698.2) rotate(-45)" fill="#505050"><path d="M-8.4 0 L-6.4 -1.15 L1.2 -1.15 L1.2 1.15 L-6.4 1.15 Z"/><rect x="0.8" y="-3.1" width="1.7" height="6.2"/><path d="M2.4 -1.7 L6.8 -1.7 Q8.2 0 6.8 1.7 L2.4 1.7 Z"/></g>
<text x="277" y="701.74" font-size="9" text-anchor="middle" fill="#fff">无</text></svg></div>
<div id="track"></div><div id="thumb"></div>
<div id="canvas"><svg width="777" height="688" viewBox="492 26 777 688" font-family='"Liberation Sans","Noto Sans CJK SC",sans-serif' style="position:absolute;left:0;top:0;"><polygon points="492,26 983,26 492,131" fill="#c5c5c5"/>
<polygon points="983,26 1024,26 1269,173 1269,500 1086,546" fill="#c3c3c3"/>
<polygon points="1024,26 1269,26 1269,173" fill="#bcbcbc"/>
<polygon points="1086,546 1269,500 1269,628" fill="#c9c9c9"/>
<polygon points="1086,546 1269,628 1269,714 1034,714" fill="#c1c1c1"/>
<polygon points="860,512 1086,546 1034,714 1000,697" fill="#c6c6c6"/>
<polygon points="492,585 1034,704 1034,714 492,714" fill="#c4c4c4"/>
<path d="M601.35 57.15 L787.75 57.15 L787.75 90.75 L621.15 90.75 L614.45 97.35 L607.75 90.75 L601.35 90.75 Z" fill="#9e5d5d" stroke="#d2d2d0" stroke-width="1.5"/>
<text x="612.7" y="76.75" font-size="8.8" text-anchor="start" fill="#fff" textLength="26.6" lengthAdjust="spacingAndGlyphs">应答中</text>
<path d="M654.05 60.95 L688.45 60.95 L688.45 80.25 L654.05 80.25 L654.05 76.85 L646.75 76.85 L646.75 64.15 L654.05 64.15 Z" fill="#9e5d5d" stroke="#d2d2d0" stroke-width="1.5"/>
<text x="659" y="73.9" font-size="9" text-anchor="start" fill="#fff" textLength="24" lengthAdjust="spacingAndGlyphs">应答Id</text>
<path d="M702.25 60.95 L739.05 60.95 L739.05 80.25 L702.25 80.25 L702.25 76.85 L694.95 76.85 L694.95 64.15 L702.25 64.15 Z" fill="#9e5d5d" stroke="#d2d2d0" stroke-width="1.5"/>
<text x="707.2" y="73.9" font-size="9" text-anchor="start" fill="#fff" textLength="26.5" lengthAdjust="spacingAndGlyphs">提问者</text>
<path d="M754.05 60.95 L782.45 60.95 L782.45 80.25 L754.05 80.25 L754.05 76.85 L746.75 76.85 L746.75 64.15 L754.05 64.15 Z" fill="#9e5d5d" stroke="#d2d2d0" stroke-width="1.5"/>
<text x="758.9" y="73.9" font-size="9" text-anchor="start" fill="#fff" textLength="17.3" lengthAdjust="spacingAndGlyphs">玩家</text>
<path d="M601.05 90.45 L608.2 90.45 L614.9 97.05 L621.6 90.45 L833.15 90.45 L833.15 123.15 L639.8 123.15 L633.1 129.75 L626.4 123.15 L619.25 123.15 L619.25 322.85 L626.4 322.85 L633.1 329.45 L639.8 322.85 L646.95 322.85 L646.95 357.15 L639.8 357.15 L633.1 363.75 L626.4 357.15 L619.25 357.15 L619.25 683.45 L626.4 683.45 L633.1 690.05 L639.8 683.45 L646.95 683.45 L646.95 744.95 L621.6 744.95 L614.9 751.55 L608.2 744.95 L601.05 744.95 Z" fill="#7d5d9e" stroke="#d2d2d0" stroke-width="1.5"/>
<text x="612.7" y="109.95" font-size="8.8" text-anchor="start" fill="#fff" textLength="17.9" lengthAdjust="spacingAndGlyphs">如果</text>
<path d="M654.75 93.75 L827.45 93.75 L827.45 120.05 L654.75 120.05 L654.75 110.45 L646.75 110.45 L646.75 97.35 L654.75 97.35 Z" fill="#7d5d9e" stroke="#d2d2d0" stroke-width="1.5"/>
<path d="M676.05 97.75 L710.45 97.75 L710.45 116.65 L676.05 116.65 L676.05 112.85 L668.75 112.85 L668.75 100.95 L676.05 100.95 Z" fill="#4f4f4f" stroke="#d2d2d0" stroke-width="1.5"/>
<text x="693.25" y="110.44" font-size="9" text-anchor="middle" fill="#fff" textLength="24" lengthAdjust="spacingAndGlyphs">应答Id</text>
<rect x="718" y="98" width="66" height="17.8" fill="#4f4f4f"/>
<rect x="765.2" y="98" width="18.8" height="17.8" fill="#8f8f8f"/>
<path d="M770.2 105 h8.8 l-4.4 4.7 Z" fill="#5c5c5c"/>
<text x="741.6" y="110.14" font-size="9" text-anchor="middle" fill="#a8a8a8">=</text>
<path d="M798.65 97.95 L821.05 97.95 L821.05 116.85 L798.65 116.85 L798.65 113.05 L791.35 113.05 L791.35 101.15 L798.65 101.15 Z" fill="#4f4f4f" stroke="#d2d2d0" stroke-width="1.5"/>
<text x="809.85" y="110.64" font-size="9" text-anchor="middle" fill="#fff" textLength="4.2" lengthAdjust="spacingAndGlyphs">0</text>
<text x="615.3" y="346.95" font-size="8.8" text-anchor="start" fill="#fff" textLength="17.7" lengthAdjust="spacingAndGlyphs">否则</text>
<path d="M619.25 123.75 L626.4 123.75 L633.1 130.35 L639.8 123.75 L954.65 123.75 L954.65 163.45 L658 163.45 L651.3 170.05 L644.6 163.45 L637.45 163.45 L637.45 228.45 L644.6 228.45 L651.3 235.05 L658 228.45 L665.95 228.45 L665.95 263.55 L658 263.55 L651.3 270.15 L644.6 263.55 L637.45 263.55 L637.45 289.05 L644.6 289.05 L651.3 295.65 L658 289.05 L665.95 289.05 L665.95 323.75 L639.8 323.75 L633.1 330.35 L626.4 323.75 L619.25 323.75 Z" fill="#7d5d9e" stroke="#d2d2d0" stroke-width="1.5"/>
<text x="631.5" y="146.25" font-size="8.8" text-anchor="start" fill="#fff" textLength="17.8" lengthAdjust="spacingAndGlyphs">如果</text>
<path d="M672.95 126.75 L949.65 126.75 L949.65 160.25 L672.95 160.25 L672.95 143.25 L665.75 143.25 L665.75 130.75 L672.95 130.75 Z" fill="#7d5d9e" stroke="#d2d2d0" stroke-width="1.5"/>
<path d="M694.25 130.75 L827.65 130.75 L827.65 155.85 L694.25 155.85 L694.25 145.45 L686.95 145.45 L686.95 135.35 L694.25 135.35 Z" fill="#5d9e88" stroke="#d2d2d0" stroke-width="1.5"/>
<text x="697.9" y="146.25" font-size="8.8" text-anchor="start" fill="#fff" textLength="18.02" lengthAdjust="spacingAndGlyphs">获取</text>
<text x="719.53" y="146.25" font-size="8.8" text-anchor="start" fill="#fff" textLength="18.02" lengthAdjust="spacingAndGlyphs">金钱</text>
<text x="743.85" y="146.25" font-size="8.8" text-anchor="start" fill="#fff" textLength="35.75" lengthAdjust="spacingAndGlyphs">金钱存储</text>
<path d="M794.45 133.95 L821.25 133.95 L821.25 152.85 L794.45 152.85 L794.45 149.05 L787.15 149.05 L787.15 137.15 L794.45 137.15 Z" fill="#4f4f4f" stroke="#d2d2d0" stroke-width="1.5"/>
<text x="807.85" y="146.64" font-size="9" text-anchor="middle" fill="#fff">玩家</text>
<rect x="835.2" y="131.2" width="65.6" height="17.6" fill="#4f4f4f"/>
<rect x="882" y="131.2" width="18.8" height="17.6" fill="#8f8f8f"/>
<path d="M887 138.1 h8.8 l-4.4 4.7 Z" fill="#5c5c5c"/>
<text x="858.6" y="143.24" font-size="9" text-anchor="middle" fill="#a8a8a8">≥</text>
<path d="M915.75 130.95 L942.55 130.95 L942.55 149.85 L915.75 149.85 L915.75 146.05 L908.45 146.05 L908.45 134.15 L915.75 134.15 Z" fill="#4f4f4f" stroke="#d2d2d0" stroke-width="1.5"/>
<text x="929.15" y="143.64" font-size="9" text-anchor="middle" fill="#fff" textLength="8.4" lengthAdjust="spacingAndGlyphs">10</text>
<path d="M636.95 163.75 L643.35 163.75 L650.05 170.35 L656.75 163.75 L1097.55 163.75 L1097.55 202.25 L656.75 202.25 L650.05 208.85 L643.35 202.25 L636.95 202.25 Z" fill="#5d9e88" stroke="#d2d2d0" stroke-width="1.5"/>
<text x="649" y="186.15" font-size="8.8" text-anchor="start" fill="#fff" textLength="18.05" lengthAdjust="spacingAndGlyphs">设置</text>
<text x="670.65" y="186.15" font-size="8.8" text-anchor="start" fill="#fff" textLength="18.05" lengthAdjust="spacingAndGlyphs">金钱</text>
<text x="695" y="186.15" font-size="8.8" text-anchor="start" fill="#fff" textLength="35.8" lengthAdjust="spacingAndGlyphs">金钱存储</text>
<path d="M744.05 166.95 L772.45 166.95 L772.45 185.85 L744.05 185.85 L744.05 182.05 L736.75 182.05 L736.75 170.15 L744.05 170.15 Z" fill="#4f4f4f" stroke="#d2d2d0" stroke-width="1.5"/>
<text x="758.25" y="179.64" font-size="9" text-anchor="middle" fill="#fff">玩家</text>
<text x="784.4" y="186.15" font-size="8.8" text-anchor="start" fill="#fff" textLength="17.6" lengthAdjust="spacingAndGlyphs">金钱</text>
<path d="M815.95 167.15 L1091.45 167.15 L1091.45 199.05 L815.95 199.05 L815.95 183.05 L808.55 183.05 L808.55 170.75 L815.95 170.75 Z" fill="#5d829e" stroke="#d2d2d0" stroke-width="1.5"/>
<path d="M836.85 170.75 L970.05 170.75 L970.05 195.85 L836.85 195.85 L836.85 185.45 L829.55 185.45 L829.55 175.35 L836.85 175.35 Z" fill="#5d9e88" stroke="#d2d2d0" stroke-width="1.5"/>
<text x="840.1" y="186.15" font-size="8.8" text-anchor="start" fill="#fff" textLength="17.9" lengthAdjust="spacingAndGlyphs">获取</text>
<text x="861.6" y="186.15" font-size="8.8" text-anchor="start" fill="#fff" textLength="17.9" lengthAdjust="spacingAndGlyphs">金钱</text>
<text x="885.8" y="186.15" font-size="8.8" text-anchor="start" fill="#fff" textLength="35.5" lengthAdjust="spacingAndGlyphs">金钱存储</text>
<path d="M936.45 174.15 L964.25 174.15 L964.25 193.05 L936.45 193.05 L936.45 189.25 L929.15 189.25 L929.15 177.35 L936.45 177.35 Z" fill="#4f4f4f" stroke="#d2d2d0" stroke-width="1.5"/>
<text x="950.35" y="186.84" font-size="9" text-anchor="middle" fill="#fff">玩家</text>
<rect x="977.7" y="171" width="66.3" height="17.8" fill="#4f4f4f"/>
<rect x="1025.2" y="171" width="18.8" height="17.8" fill="#8f8f8f"/>
<path d="M1030.2 178 h8.8 l-4.4 4.7 Z" fill="#5c5c5c"/>
<text x="1001.45" y="183.14" font-size="9" text-anchor="middle" fill="#a8a8a8">-</text>
<path d="M1058.55 170.75 L1085.15 170.75 L1085.15 189.65 L1058.55 189.65 L1058.55 185.85 L1051.25 185.85 L1051.25 173.95 L1058.55 173.95 Z" fill="#4f4f4f" stroke="#d2d2d0" stroke-width="1.5"/>
<text x="1071.85" y="183.44" font-size="9" text-anchor="middle" fill="#fff" textLength="8.4" lengthAdjust="spacingAndGlyphs">10</text>
<path d="M636.95 203.35 L643.35 203.35 L650.05 209.95 L656.75 203.35 L891.55 203.35 L891.55 229.45 L656.75 229.45 L650.05 236.05 L643.35 229.45 L636.95 229.45 Z" fill="#9e5d80" stroke="#d2d2d0" stroke-width="1.5"/>
<text x="649.3" y="219.35" font-size="8.8" text-anchor="start" fill="#fff" textLength="35.7" lengthAdjust="spacingAndGlyphs">创建实体</text>
<text x="691.3" y="219.35" font-size="8.8" text-anchor="start" fill="#fff" textLength="18" lengthAdjust="spacingAndGlyphs">模板</text>
<path d="M723.45 207.15 L814.05 207.15 L814.05 226.05 L723.45 226.05 L723.45 222.25 L716.15 222.25 L716.15 210.35 L723.45 210.35 Z" fill="#4f4f4f" stroke="#d2d2d0" stroke-width="1.5"/>
<rect x="793.7" y="207.9" width="19.6" height="17.4" fill="#8f8f8f"/>
<g transform="translate(803.8 216.3) rotate(-45)" fill="#505050"><path d="M-8.4 0 L-6.4 -1.15 L1.2 -1.15 L1.2 1.15 L-6.4 1.15 Z"/><rect x="0.8" y="-3.1" width="1.7" height="6.2"/><path d="M2.4 -1.7 L6.8 -1.7 Q8.2 0 6.8 1.7 L2.4 1.7 Z"/></g>
<text x="755.5" y="219.84" font-size="9" text-anchor="middle" fill="#fff" textLength="63" lengthAdjust="spacingAndGlyphs">#19: 实体模板 3</text>
<text x="825.4" y="219.35" font-size="8.8" text-anchor="start" fill="#fff" textLength="18.2" lengthAdjust="spacingAndGlyphs">容器</text>
<path d="M856.85 207.15 L885.05 207.15 L885.05 226.05 L856.85 226.05 L856.85 222.25 L849.55 222.25 L849.55 210.35 L856.85 210.35 Z" fill="#4f4f4f" stroke="#d2d2d0" stroke-width="1.5"/>
<text x="870.95" y="219.84" font-size="9" text-anchor="middle" fill="#fff">玩家</text>
<text x="633.3" y="253.15" font-size="8.8" text-anchor="start" fill="#fff" textLength="18.1" lengthAdjust="spacingAndGlyphs">否则</text>
<path d="M636.95 263.75 L643.35 263.75 L650.05 270.35 L656.75 263.75 L1037.75 263.75 L1037.75 289.95 L656.75 289.95 L650.05 296.55 L643.35 289.95 L636.95 289.95 Z" fill="#9e5d80" stroke="#d2d2d0" stroke-width="1.5"/>
<text x="649" y="279.55" font-size="8.8" text-anchor="start" fill="#fff" textLength="35.9" lengthAdjust="spacingAndGlyphs">显示气泡</text>
<text x="691.2" y="279.55" font-size="8.8" text-anchor="start" fill="#fff" textLength="18.1" lengthAdjust="spacingAndGlyphs">目标</text>
<path d="M723.05 267.05 L784.45 267.05 L784.45 285.95 L723.05 285.95 L723.05 282.15 L715.75 282.15 L715.75 270.25 L723.05 270.25 Z" fill="#4f4f4f" stroke="#d2d2d0" stroke-width="1.5"/>
<rect x="764.1" y="267.8" width="19.6" height="17.4" fill="#8f8f8f"/>
<g transform="translate(774.2 276.2) rotate(-45)" fill="#505050"><path d="M-8.4 0 L-6.4 -1.15 L1.2 -1.15 L1.2 1.15 L-6.4 1.15 Z"/><rect x="0.8" y="-3.1" width="1.7" height="6.2"/><path d="M2.4 -1.7 L6.8 -1.7 Q8.2 0 6.8 1.7 L2.4 1.7 Z"/></g>
<text x="740.6" y="279.74" font-size="9" text-anchor="middle" fill="#fff" textLength="32.4" lengthAdjust="spacingAndGlyphs">#47: NPC</text>
<text x="795.4" y="279.55" font-size="8.8" text-anchor="start" fill="#fff" textLength="18.2" lengthAdjust="spacingAndGlyphs">消息</text>
<path d="M827.65 267.05 L887.85 267.05 L887.85 285.95 L827.65 285.95 L827.65 282.15 L820.35 282.15 L820.35 270.25 L827.65 270.25 Z" fill="#4f4f4f" stroke="#d2d2d0" stroke-width="1.5"/>
<text x="857.75" y="280.46" font-size="11" text-anchor="middle" fill="#fff">'没钱别买'</text>
<text x="899.5" y="279.55" font-size="8.8" text-anchor="start" fill="#fff" textLength="44.5" lengthAdjust="spacingAndGlyphs">隐藏说话者</text>
<path d="M957.65 267.05 L1031.45 267.05 L1031.45 285.95 L957.65 285.95 L957.65 282.15 L950.35 282.15 L950.35 270.25 L957.65 270.25 Z" fill="#4f4f4f" stroke="#d2d2d0" stroke-width="1.5"/>
<rect x="1011.5" y="267.8" width="19.2" height="17.4" fill="#8f8f8f"/>
<path d="M1016.7 274.6 h8.8 l-4.4 4.7 Z" fill="#5c5c5c"/>
<text x="982.15" y="280.46" font-size="11" text-anchor="middle" fill="#fff">真</text>
<path d="M619.25 357.65 L626.4 357.65 L633.1 364.25 L639.8 357.65 L851.15 357.65 L851.15 389.75 L658 389.75 L651.3 396.35 L644.6 389.75 L637.45 389.75 L637.45 588.65 L644.6 588.65 L651.3 595.25 L658 588.65 L665.95 588.65 L665.95 623.75 L658 623.75 L651.3 630.35 L644.6 623.75 L637.45 623.75 L637.45 650.45 L644.6 650.45 L651.3 657.05 L658 650.45 L665.95 650.45 L665.95 683.95 L639.8 683.95 L633.1 690.55 L626.4 683.95 L619.25 683.95 Z" fill="#7d5d9e" stroke="#d2d2d0" stroke-width="1.5"/>
<text x="631.7" y="376.55" font-size="8.8" text-anchor="start" fill="#fff" textLength="17.1" lengthAdjust="spacingAndGlyphs">如果</text>
<path d="M673.15 361.55 L845.45 361.55 L845.45 386.25 L673.15 386.25 L673.15 376.45 L665.95 376.45 L665.95 365.55 L673.15 365.55 Z" fill="#7d5d9e" stroke="#d2d2d0" stroke-width="1.5"/>
<path d="M694.25 363.75 L728.65 363.75 L728.65 382.65 L694.25 382.65 L694.25 378.85 L686.95 378.85 L686.95 366.95 L694.25 366.95 Z" fill="#4f4f4f" stroke="#d2d2d0" stroke-width="1.5"/>
<text x="711.45" y="376.44" font-size="9" text-anchor="middle" fill="#fff" textLength="24" lengthAdjust="spacingAndGlyphs">应答Id</text>
<rect x="736" y="364.2" width="66" height="18.2" fill="#4f4f4f"/>
<rect x="783.2" y="364.2" width="18.8" height="18.2" fill="#8f8f8f"/>
<path d="M788.2 371.4 h8.8 l-4.4 4.7 Z" fill="#5c5c5c"/>
<text x="759.6" y="376.54" font-size="9" text-anchor="middle" fill="#a8a8a8">=</text>
<path d="M816.85 363.75 L839.25 363.75 L839.25 382.65 L816.85 382.65 L816.85 378.85 L809.55 378.85 L809.55 366.95 L816.85 366.95 Z" fill="#4f4f4f" stroke="#d2d2d0" stroke-width="1.5"/>
<text x="828.05" y="376.44" font-size="9" text-anchor="middle" fill="#fff" textLength="4.2" lengthAdjust="spacingAndGlyphs">1</text>
<text x="633.9" y="612.95" font-size="8.8" text-anchor="start" fill="#fff" textLength="17.6" lengthAdjust="spacingAndGlyphs">否则</text>
<path d="M637.45 390.05 L644.6 390.05 L651.3 396.65 L658 390.05 L972.85 390.05 L972.85 429.75 L676.2 429.75 L669.5 436.35 L662.8 429.75 L655.65 429.75 L655.65 494.75 L662.8 494.75 L669.5 501.35 L676.2 494.75 L684.15 494.75 L684.15 529.85 L676.2 529.85 L669.5 536.45 L662.8 529.85 L655.65 529.85 L655.65 555.35 L662.8 555.35 L669.5 561.95 L676.2 555.35 L684.15 555.35 L684.15 590.05 L658 590.05 L651.3 596.65 L644.6 590.05 L637.45 590.05 Z" fill="#7d5d9e" stroke="#d2d2d0" stroke-width="1.5"/>
<text x="649.7" y="412.55" font-size="8.8" text-anchor="start" fill="#fff" textLength="17.8" lengthAdjust="spacingAndGlyphs">如果</text>
<path d="M691.15 393.05 L967.85 393.05 L967.85 426.55 L691.15 426.55 L691.15 409.55 L683.95 409.55 L683.95 397.05 L691.15 397.05 Z" fill="#7d5d9e" stroke="#d2d2d0" stroke-width="1.5"/>
<path d="M712.45 397.05 L845.85 397.05 L845.85 422.15 L712.45 422.15 L712.45 411.75 L705.15 411.75 L705.15 401.65 L712.45 401.65 Z" fill="#5d9e88" stroke="#d2d2d0" stroke-width="1.5"/>
<text x="716.1" y="412.55" font-size="8.8" text-anchor="start" fill="#fff" textLength="18.02" lengthAdjust="spacingAndGlyphs">获取</text>
<text x="737.73" y="412.55" font-size="8.8" text-anchor="start" fill="#fff" textLength="18.02" lengthAdjust="spacingAndGlyphs">金钱</text>
<text x="762.05" y="412.55" font-size="8.8" text-anchor="start" fill="#fff" textLength="35.75" lengthAdjust="spacingAndGlyphs">金钱存储</text>
<path d="M812.65 400.25 L839.45 400.25 L839.45 419.15 L812.65 419.15 L812.65 415.35 L805.35 415.35 L805.35 403.45 L812.65 403.45 Z" fill="#4f4f4f" stroke="#d2d2d0" stroke-width="1.5"/>
<text x="826.05" y="412.94" font-size="9" text-anchor="middle" fill="#fff">玩家</text>
<rect x="853.4" y="397.5" width="65.6" height="17.6" fill="#4f4f4f"/>
<rect x="900.2" y="397.5" width="18.8" height="17.6" fill="#8f8f8f"/>
<path d="M905.2 404.4 h8.8 l-4.4 4.7 Z" fill="#5c5c5c"/>
<text x="876.8" y="409.54" font-size="9" text-anchor="middle" fill="#a8a8a8">≥</text>
<path d="M933.95 397.25 L960.75 397.25 L960.75 416.15 L933.95 416.15 L933.95 412.35 L926.65 412.35 L926.65 400.45 L933.95 400.45 Z" fill="#4f4f4f" stroke="#d2d2d0" stroke-width="1.5"/>
<text x="947.35" y="409.94" font-size="9" text-anchor="middle" fill="#fff" textLength="8.4" lengthAdjust="spacingAndGlyphs">10</text>
<path d="M655.15 430.05 L661.55 430.05 L668.25 436.65 L674.95 430.05 L1121.15 430.05 L1121.15 468.55 L674.95 468.55 L668.25 475.15 L661.55 468.55 L655.15 468.55 Z" fill="#5d9e88" stroke="#d2d2d0" stroke-width="1.5"/>
<text x="667.2" y="452.45" font-size="8.8" text-anchor="start" fill="#fff" textLength="18.05" lengthAdjust="spacingAndGlyphs">设置</text>
<text x="688.85" y="452.45" font-size="8.8" text-anchor="start" fill="#fff" textLength="18.05" lengthAdjust="spacingAndGlyphs">金钱</text>
<text x="713.2" y="452.45" font-size="8.8" text-anchor="start" fill="#fff" textLength="35.8" lengthAdjust="spacingAndGlyphs">金钱存储</text>
<path d="M762.25 433.25 L790.65 433.25 L790.65 452.15 L762.25 452.15 L762.25 448.35 L754.95 448.35 L754.95 436.45 L762.25 436.45 Z" fill="#4f4f4f" stroke="#d2d2d0" stroke-width="1.5"/>
<text x="776.45" y="445.94" font-size="9" text-anchor="middle" fill="#fff">玩家</text>
<text x="802.6" y="452.45" font-size="8.8" text-anchor="start" fill="#fff" textLength="17.6" lengthAdjust="spacingAndGlyphs">金钱</text>
<path d="M834.15 433.45 L1115.05 433.45 L1115.05 465.35 L834.15 465.35 L834.15 449.35 L826.75 449.35 L826.75 437.05 L834.15 437.05 Z" fill="#5d829e" stroke="#d2d2d0" stroke-width="1.5"/>
<path d="M855.05 437.05 L988.25 437.05 L988.25 462.15 L855.05 462.15 L855.05 451.75 L847.75 451.75 L847.75 441.65 L855.05 441.65 Z" fill="#5d9e88" stroke="#d2d2d0" stroke-width="1.5"/>
<text x="858.3" y="452.45" font-size="8.8" text-anchor="start" fill="#fff" textLength="17.9" lengthAdjust="spacingAndGlyphs">获取</text>
<text x="879.8" y="452.45" font-size="8.8" text-anchor="start" fill="#fff" textLength="17.9" lengthAdjust="spacingAndGlyphs">金钱</text>
<text x="904" y="452.45" font-size="8.8" text-anchor="start" fill="#fff" textLength="35.5" lengthAdjust="spacingAndGlyphs">金钱存储</text>
<path d="M954.65 440.45 L982.45 440.45 L982.45 459.35 L954.65 459.35 L954.65 455.55 L947.35 455.55 L947.35 443.65 L954.65 443.65 Z" fill="#4f4f4f" stroke="#d2d2d0" stroke-width="1.5"/>
<text x="968.55" y="453.14" font-size="9" text-anchor="middle" fill="#fff">玩家</text>
<rect x="995.9" y="437.3" width="66.3" height="17.8" fill="#4f4f4f"/>
<rect x="1043.4" y="437.3" width="18.8" height="17.8" fill="#8f8f8f"/>
<path d="M1048.4 444.3 h8.8 l-4.4 4.7 Z" fill="#5c5c5c"/>
<text x="1019.65" y="449.44" font-size="9" text-anchor="middle" fill="#a8a8a8">-</text>
<path d="M1076.75 437.05 L1109.35 437.05 L1109.35 455.95 L1076.75 455.95 L1076.75 452.15 L1069.45 452.15 L1069.45 440.25 L1076.75 440.25 Z" fill="#4f4f4f" stroke="#d2d2d0" stroke-width="1.5"/>
<text x="1093.05" y="449.74" font-size="9" text-anchor="middle" fill="#fff" textLength="12.6" lengthAdjust="spacingAndGlyphs">100</text>
<path d="M655.15 469.65 L661.55 469.65 L668.25 476.25 L674.95 469.65 L909.75 469.65 L909.75 495.75 L674.95 495.75 L668.25 502.35 L661.55 495.75 L655.15 495.75 Z" fill="#9e5d80" stroke="#d2d2d0" stroke-width="1.5"/>
<text x="667.5" y="485.65" font-size="8.8" text-anchor="start" fill="#fff" textLength="35.7" lengthAdjust="spacingAndGlyphs">创建实体</text>
<text x="709.5" y="485.65" font-size="8.8" text-anchor="start" fill="#fff" textLength="18" lengthAdjust="spacingAndGlyphs">模板</text>
<path d="M741.65 473.45 L832.25 473.45 L832.25 492.35 L741.65 492.35 L741.65 488.55 L734.35 488.55 L734.35 476.65 L741.65 476.65 Z" fill="#4f4f4f" stroke="#d2d2d0" stroke-width="1.5"/>
<rect x="811.9" y="474.2" width="19.6" height="17.4" fill="#8f8f8f"/>
<g transform="translate(822 482.6) rotate(-45)" fill="#505050"><path d="M-8.4 0 L-6.4 -1.15 L1.2 -1.15 L1.2 1.15 L-6.4 1.15 Z"/><rect x="0.8" y="-3.1" width="1.7" height="6.2"/><path d="M2.4 -1.7 L6.8 -1.7 Q8.2 0 6.8 1.7 L2.4 1.7 Z"/></g>
<text x="773.7" y="486.14" font-size="9" text-anchor="middle" fill="#fff" textLength="63" lengthAdjust="spacingAndGlyphs">#20: 实体模板 4</text>
<text x="843.6" y="485.65" font-size="8.8" text-anchor="start" fill="#fff" textLength="18.2" lengthAdjust="spacingAndGlyphs">容器</text>
<path d="M875.05 473.45 L903.25 473.45 L903.25 492.35 L875.05 492.35 L875.05 488.55 L867.75 488.55 L867.75 476.65 L875.05 476.65 Z" fill="#4f4f4f" stroke="#d2d2d0" stroke-width="1.5"/>
<text x="889.15" y="486.14" font-size="9" text-anchor="middle" fill="#fff">玩家</text>
<text x="651.5" y="519.45" font-size="8.8" text-anchor="start" fill="#fff" textLength="18.1" lengthAdjust="spacingAndGlyphs">否则</text>
<path d="M655.15 530.05 L661.55 530.05 L668.25 536.65 L674.95 530.05 L1055.95 530.05 L1055.95 556.25 L674.95 556.25 L668.25 562.85 L661.55 556.25 L655.15 556.25 Z" fill="#9e5d80" stroke="#d2d2d0" stroke-width="1.5"/>
<text x="667.2" y="545.85" font-size="8.8" text-anchor="start" fill="#fff" textLength="35.9" lengthAdjust="spacingAndGlyphs">显示气泡</text>
<text x="709.4" y="545.85" font-size="8.8" text-anchor="start" fill="#fff" textLength="18.1" lengthAdjust="spacingAndGlyphs">目标</text>
<path d="M741.25 533.35 L802.65 533.35 L802.65 552.25 L741.25 552.25 L741.25 548.45 L733.95 548.45 L733.95 536.55 L741.25 536.55 Z" fill="#4f4f4f" stroke="#d2d2d0" stroke-width="1.5"/>
<rect x="782.3" y="534.1" width="19.6" height="17.4" fill="#8f8f8f"/>
<g transform="translate(792.4 542.5) rotate(-45)" fill="#505050"><path d="M-8.4 0 L-6.4 -1.15 L1.2 -1.15 L1.2 1.15 L-6.4 1.15 Z"/><rect x="0.8" y="-3.1" width="1.7" height="6.2"/><path d="M2.4 -1.7 L6.8 -1.7 Q8.2 0 6.8 1.7 L2.4 1.7 Z"/></g>
<text x="758.8" y="546.04" font-size="9" text-anchor="middle" fill="#fff" textLength="32.4" lengthAdjust="spacingAndGlyphs">#47: NPC</text>
<text x="813.6" y="545.85" font-size="8.8" text-anchor="start" fill="#fff" textLength="18.2" lengthAdjust="spacingAndGlyphs">消息</text>
<path d="M845.85 533.35 L906.05 533.35 L906.05 552.25 L845.85 552.25 L845.85 548.45 L838.55 548.45 L838.55 536.55 L845.85 536.55 Z" fill="#4f4f4f" stroke="#d2d2d0" stroke-width="1.5"/>
<text x="875.95" y="546.76" font-size="11" text-anchor="middle" fill="#fff">'没钱别买'</text>
<text x="917.7" y="545.85" font-size="8.8" text-anchor="start" fill="#fff" textLength="44.5" lengthAdjust="spacingAndGlyphs">隐藏说话者</text>
<path d="M975.85 533.35 L1049.65 533.35 L1049.65 552.25 L975.85 552.25 L975.85 548.45 L968.55 548.45 L968.55 536.55 L975.85 536.55 Z" fill="#4f4f4f" stroke="#d2d2d0" stroke-width="1.5"/>
<rect x="1029.7" y="534.1" width="19.2" height="17.4" fill="#8f8f8f"/>
<path d="M1034.9 540.9 h8.8 l-4.4 4.7 Z" fill="#5c5c5c"/>
<text x="1000.35" y="546.76" font-size="11" text-anchor="middle" fill="#fff">真</text></svg></div>
<div id="edge"></div>
</div>
</body></html>
